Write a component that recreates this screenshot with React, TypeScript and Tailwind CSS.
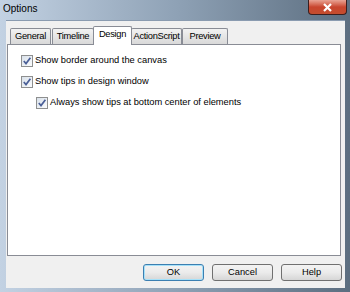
import React from "react";

const font = { fontFamily: '"Liberation Sans", Arial, sans-serif' };

function Check({ label }: { label: string }) {
  return (
    <div className="flex items-center gap-[2px] h-[13px]">
      <div className="w-[12px] h-[12px] border border-[#8e8f8f] bg-gradient-to-br from-[#d9e1ea] to-[#fbfcfd] flex items-center justify-center">
        <svg width="10" height="10" viewBox="0 0 10 10">
          <path d="M1.8 5 L4 7.6 L8.4 1.8" fill="none" stroke="#4a5f97" strokeWidth="1.7" />
        </svg>
      </div>
      <span className="text-[9.3px] leading-none text-black">{label}</span>
    </div>
  );
}

function Tab({ label, w, active }: { label: string; w: string; active?: boolean }) {
  return (
    <div
      className={
        (active
          ? "relative z-10 h-[19px] -mb-px pt-[3px] bg-white rounded-t-[2px] "
          : "h-[16px] pt-[3px] bg-gradient-to-b from-[#f2f2f2] to-[#d9d9d9] rounded-t-[2px] ") +
        "border border-b-0 border-[#898c95] text-[9.3px] leading-none text-center whitespace-nowrap tracking-[-0.3px] " +
        w
      }
    >
      {label}
    </div>
  );
}

function Btn({ label, focus }: { label: string; focus?: boolean }) {
  return (
    <div
      className={
        "w-[61px] h-[17px] rounded-[3px] border flex items-center justify-center text-[9.3px] leading-none bg-gradient-to-b from-[#f3f3f3] via-[#ebebeb] to-[#d6d6d6] " +
        (focus ? "border-[#3c7fb1] shadow-[inset_0_0_0_1px_#a6e1f9]" : "border-[#707070]")
      }
    >
      {label}
    </div>
  );
}

export default function App() {
  return (
    <div
      className="w-[350px] h-[292px] overflow-hidden flex flex-col bg-gradient-to-r from-[#c3d2e3] via-[#8fa2b6] to-[#5c6e80]"
      style={font}
    >
      <div className="h-[20px] flex items-start justify-between">
        <span className="pl-[3px] pt-[4px] text-[10px] leading-none text-black">Options</span>
        <div className="w-[39px] h-[15px] mr-[3px] rounded-b-[4px] border border-t-0 border-[#3b1e1e] bg-gradient-to-b from-[#e8a394] via-[#c8452e] to-[#c44d2e] flex items-center justify-center">
          <svg width="11" height="9" viewBox="0 0 11 9">
            <path d="M2 1 L9 8 M9 1 L2 8" stroke="#fff" strokeWidth="2.2" />
          </svg>
        </div>
      </div>
      <div className="ml-[6px] w-[339px] h-[268px] bg-[#f0f0f0] border-t border-[#8a9bb0] flex flex-col">
        <div className="pl-[1px] pt-[4px] flex flex-col">
          <div className="flex items-end pl-[3px] h-[19px]">
            <Tab label="General" w="w-[41px]" />
            <Tab label="Timeline" w="w-[42px] ml-px" />
            <Tab label="Design" w="w-[39px] -ml-px" active />
            <Tab label="ActionScript" w="w-[51px] -ml-px" />
            <Tab label="Preview" w="w-[46px]" />
          </div>
          <div className="w-[334px] h-[212px] bg-white border border-[#898c95] flex flex-col gap-[8px] pl-[13px] pt-[9px]">
            <Check label="Show border around the canvas" />
            <Check label="Show tips in design window" />
            <div className="pl-[15px]">
              <Check label="Always show tips at bottom center of elements" />
            </div>
          </div>
        </div>
        <div className="flex gap-[8px] pl-[137px] pt-[8px]">
          <Btn label="OK" focus />
          <Btn label="Cancel" />
          <Btn label="Help" />
        </div>
      </div>
    </div>
  );
}
